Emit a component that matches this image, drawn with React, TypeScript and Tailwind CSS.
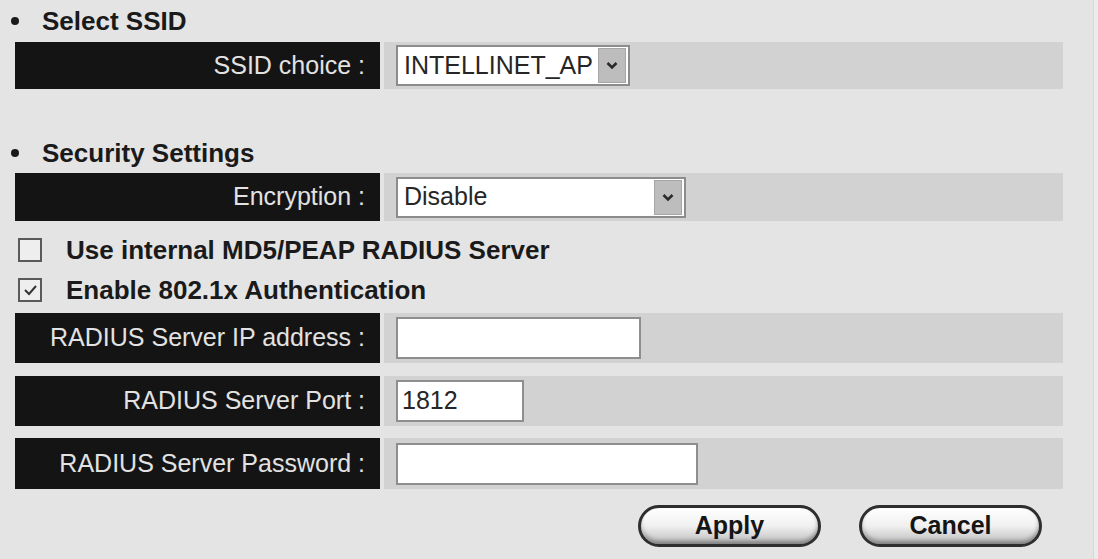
import React from "react";

function Chevron() {
  return (
    <svg width="12" height="9" viewBox="0 0 12 9">
      <polyline points="1.5,2 6,6.5 10.5,2" fill="none" stroke="#2a2a2a" strokeWidth="2.6" />
    </svg>
  );
}

function Header({ children, h, mt = 0 }: { children: React.ReactNode; h: string; mt?: number }) {
  return (
    <div className={`flex items-center ${h}`} style={mt ? { marginTop: mt } : undefined}>
      <span className="w-[8px] h-[8px] rounded-full bg-[#1a1a1a] -ml-[4px] mr-[23px]" />
      <span className="text-[26px] font-bold text-[#1a1a1a]">{children}</span>
    </div>
  );
}

function Row({ label, h, children }: { label: string; h: string; children: React.ReactNode }) {
  return (
    <div className={`flex ${h}`}>
      <div className="w-[365px] bg-[#141414] flex items-center justify-end pr-[15px]">
        <span className="text-[#e2e2e2] text-[25px] whitespace-nowrap">{label}</span>
      </div>
      <div className="flex-1 ml-[4px] bg-[#d2d2d2] flex items-center pl-[12px]">{children}</div>
    </div>
  );
}

function Select({ value, w }: { value: string; w: string }) {
  return (
    <div className={`${w} h-[41px] bg-white border-2 border-[#8c8c8c] flex items-center justify-between pl-[6px] pr-[2px]`}>
      <span className="text-[25px] text-[#262626] whitespace-nowrap">{value}</span>
      <span className="w-[28px] h-[35px] bg-[#bdbdbd] border border-[#a6a6a6] flex items-center justify-center">
        <Chevron />
      </span>
    </div>
  );
}

function Input({ value = "", w }: { value?: string; w: string }) {
  return (
    <div className={`${w} h-[42px] bg-white border-2 border-[#8e8e8e] flex items-center pl-[4px]`}>
      <span className="text-[25px] text-[#262626]">{value}</span>
    </div>
  );
}

function Checkbox({ checked, label }: { checked?: boolean; label: string }) {
  return (
    <div className="flex items-center h-[40px]">
      <span className="w-[24px] h-[24px] ml-[3px] border-2 border-[#5a5a5a] bg-[#eeeeee] flex items-center justify-center">
        {checked && (
          <svg width="15" height="12" viewBox="0 0 15 12">
            <polyline points="2,6 6,10 13,2" fill="none" stroke="#333" strokeWidth="2" />
          </svg>
        )}
      </span>
      <span className="ml-[24px] text-[26px] font-bold text-[#1a1a1a] whitespace-nowrap">{label}</span>
    </div>
  );
}

function PillButton({ children }: { children: React.ReactNode }) {
  return (
    <div className="w-[183px] h-[42px] rounded-full border-[3px] border-[#2e2e2e] bg-gradient-to-b from-[#ffffff] via-[#f0f0f0] to-[#bdbdbd] shadow-[inset_0_-3px_4px_rgba(0,0,0,0.35),inset_2px_2px_3px_rgba(255,255,255,0.9)] flex items-center justify-center">
      <span className="text-[25px] font-bold text-[#151515]">{children}</span>
    </div>
  );
}

export default function App() {
  return (
    <div className="w-[1098px] h-[559px] bg-[#e4e4e4] overflow-hidden font-['Liberation_Sans',Arial,sans-serif] flex">
      <div className="w-[1093px] h-full pl-[15px]">
        <div className="w-[1048px] flex flex-col">
          <Header h="h-[42px]">Select SSID</Header>
          <Row label="SSID choice :" h="h-[47px]">
            <Select value="INTELLINET_AP" w="w-[234px]" />
          </Row>
          <Header h="h-[40px]" mt={44}>Security Settings</Header>
          <Row label="Encryption :" h="h-[48px]">
            <Select value="Disable" w="w-[290px]" />
          </Row>
          <div className="mt-[9px]">
            <Checkbox label="Use internal MD5/PEAP RADIUS Server" />
            <Checkbox checked label="Enable 802.1x Authentication" />
          </div>
          <div className="mt-[3px]">
            <Row label="RADIUS Server IP address :" h="h-[50px]">
              <Input w="w-[245px]" />
            </Row>
          </div>
          <div className="mt-[13px]">
            <Row label="RADIUS Server Port :" h="h-[50px]">
              <Input value="1812" w="w-[128px]" />
            </Row>
          </div>
          <div className="mt-[12px]">
            <Row label="RADIUS Server Password :" h="h-[51px]">
              <Input w="w-[302px]" />
            </Row>
          </div>
          <div className="mt-[16px] flex justify-end gap-[38px] pr-[21px]">
            <PillButton>Apply</PillButton>
            <PillButton>Cancel</PillButton>
          </div>
        </div>
      </div>
      <div className="flex-1 bg-[#ececec] border-l border-[#d8d8d8]" />
    </div>
  );
}
